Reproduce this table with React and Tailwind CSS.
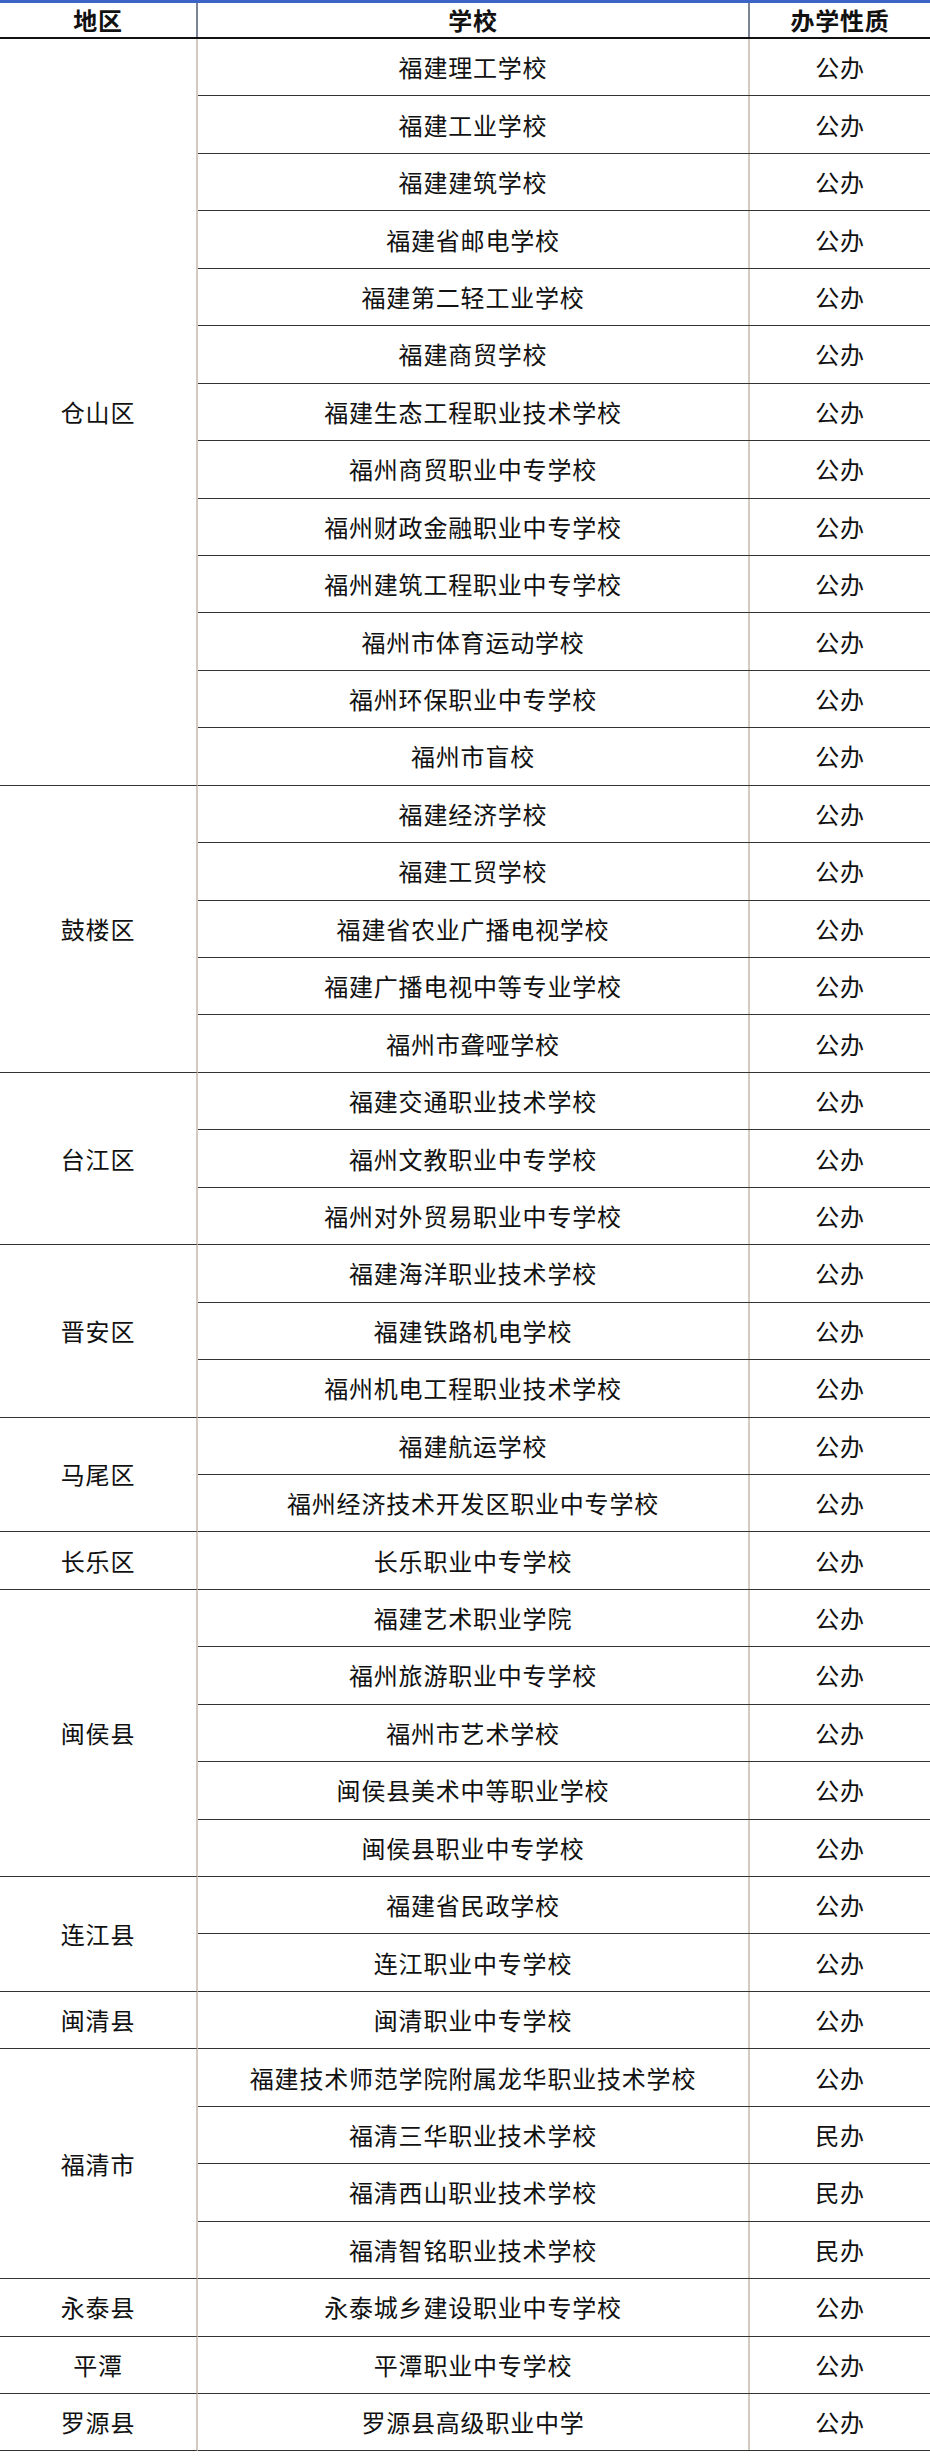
const GROUPS = [
  {
    area: "仓山区",
    schools: [
      ["福建理工学校", "公办"],
      ["福建工业学校", "公办"],
      ["福建建筑学校", "公办"],
      ["福建省邮电学校", "公办"],
      ["福建第二轻工业学校", "公办"],
      ["福建商贸学校", "公办"],
      ["福建生态工程职业技术学校", "公办"],
      ["福州商贸职业中专学校", "公办"],
      ["福州财政金融职业中专学校", "公办"],
      ["福州建筑工程职业中专学校", "公办"],
      ["福州市体育运动学校", "公办"],
      ["福州环保职业中专学校", "公办"],
      ["福州市盲校", "公办"],
    ],
  },
  {
    area: "鼓楼区",
    schools: [
      ["福建经济学校", "公办"],
      ["福建工贸学校", "公办"],
      ["福建省农业广播电视学校", "公办"],
      ["福建广播电视中等专业学校", "公办"],
      ["福州市聋哑学校", "公办"],
    ],
  },
  {
    area: "台江区",
    schools: [
      ["福建交通职业技术学校", "公办"],
      ["福州文教职业中专学校", "公办"],
      ["福州对外贸易职业中专学校", "公办"],
    ],
  },
  {
    area: "晋安区",
    schools: [
      ["福建海洋职业技术学校", "公办"],
      ["福建铁路机电学校", "公办"],
      ["福州机电工程职业技术学校", "公办"],
    ],
  },
  {
    area: "马尾区",
    schools: [
      ["福建航运学校", "公办"],
      ["福州经济技术开发区职业中专学校", "公办"],
    ],
  },
  { area: "长乐区", schools: [["长乐职业中专学校", "公办"]] },
  {
    area: "闽侯县",
    schools: [
      ["福建艺术职业学院", "公办"],
      ["福州旅游职业中专学校", "公办"],
      ["福州市艺术学校", "公办"],
      ["闽侯县美术中等职业学校", "公办"],
      ["闽侯县职业中专学校", "公办"],
    ],
  },
  {
    area: "连江县",
    schools: [
      ["福建省民政学校", "公办"],
      ["连江职业中专学校", "公办"],
    ],
  },
  { area: "闽清县", schools: [["闽清职业中专学校", "公办"]] },
  {
    area: "福清市",
    schools: [
      ["福建技术师范学院附属龙华职业技术学校", "公办"],
      ["福清三华职业技术学校", "民办"],
      ["福清西山职业技术学校", "民办"],
      ["福清智铭职业技术学校", "民办"],
    ],
  },
  { area: "永泰县", schools: [["永泰城乡建设职业中专学校", "公办"]] },
  { area: "平潭", schools: [["平潭职业中专学校", "公办"]] },
  { area: "罗源县", schools: [["罗源县高级职业中学", "公办"]] },
];

export default function App() {
  return (
    <div
      className="w-[930px] bg-white text-[24px] leading-none tracking-[0.8px] text-[#111]"
      style={{ fontFamily: '"Noto Sans CJK SC", "Noto Sans", sans-serif' }}
    >
      <div className="h-[3px] bg-[#3b64c6]" />

      {/* Header */}
      <div className="flex h-[36px] border-b-2 border-[#111] font-bold">
        <div className="w-[198px] flex items-center justify-center border-r-2 border-[#7c8496]">
          地区
        </div>
        <div className="w-[552px] flex items-center justify-center border-r-2 border-[#7c8496]">
          学校
        </div>
        <div className="flex-1 flex items-center justify-center">办学性质</div>
      </div>

      {/* Body: each row carries its own bottom line, the area cell lines up with the last one */}
      {GROUPS.map((g) => (
        <div key={g.area} className="flex">
          <div className="w-[198px] flex items-center justify-center border-r-2 border-b-[1.5px] border-r-[#d3cbc2] border-b-[#333]">
            {g.area}
          </div>
          <div className="flex-1 flex flex-col">
            {g.schools.map(([name, kind]) => (
              <div key={name} className="flex h-[57.45px] border-b-[1.5px] border-[#333]">
                <div className="w-[552px] flex items-center justify-center border-r-2 border-[#d3cbc2]">
                  {name}
                </div>
                <div className="flex-1 flex items-center justify-center">{kind}</div>
              </div>
            ))}
          </div>
        </div>
      ))}
    </div>
  );
}
